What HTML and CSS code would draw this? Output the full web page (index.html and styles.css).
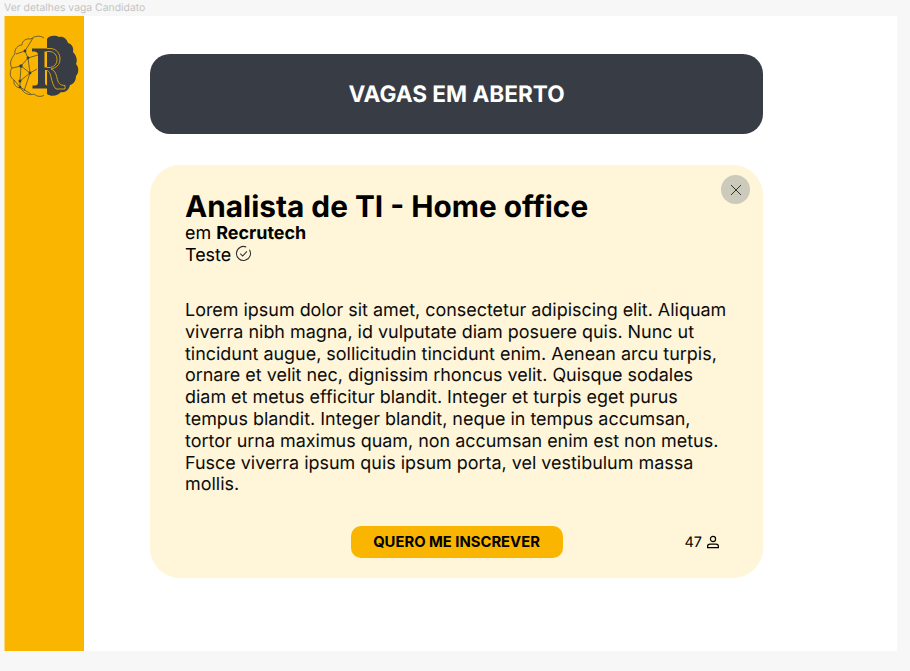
FILE: index.html
```html
<!DOCTYPE html>
<html lang="en">
<head>
  <meta charset="UTF-8">
  <title>Ver detalhes vaga Candidato</title>
  <link rel="stylesheet" href="styles.css">
</head>
<body>
  <div class="frame-label">Ver detalhes vaga Candidato</div>

  <div class="frame">
    <aside class="sidebar">
      <svg class="logo" viewBox="0 0 70 66" width="70" height="66" fill="none">
        <defs>
          <clipPath id="right-half"><rect x="38" y="0" width="32" height="66"/></clipPath>
        </defs>
        <!-- dark half of the brain -->
        <path d="M38 4C40 0 47 0 50 2C54 1 58 4 59 8C63 9 65 13 64 17C67 20 69 25 67 29C70 32 70 38 67 41C67 45 65 49 61 50C60 55 56 58 52 57C49 61 42 62 38 59Z" fill="#383c45"/>
        <!-- outlined half with its network -->
        <g stroke="#383c45" stroke-width=".7">
          <path d="M35 3C31 0 25 1 22 4C17 3 13 6 13 10C9 10 5 14 6 19C2 23 0 29 3 33C0 37 1 43 5 45C4 50 8 53 12 53C14 58 20 61 25 59C28 62 33 62 35 60"/>
          <path d="M24 3L16 16L19 23L12 31L11 46L11 52L22 59M16 16L7 19M19 23L21 38L11 46M12 31L21 38L28 34M12 31L3 33M19 23L29 20M21 38L15 56M11 52L5 45"/>
        </g>
        <g fill="#383c45">
          <circle cx="16" cy="16" r="1.4"/>
          <circle cx="19" cy="23" r="1.4"/>
          <circle cx="12" cy="31" r="1.7"/>
          <circle cx="21" cy="38" r="1.4"/>
          <circle cx="11" cy="46" r="1.5"/>
          <circle cx="11" cy="52" r="1.3"/>
        </g>
        <!-- the R: solid stem on the left, yellow line over the dark half -->
        <path d="M23 13.5H41C48 13.5 51 19 51 24C51 30 47 33 42 34C45 35 47 38 48 43C49 48 51 50.5 56 50.5V54H47C44 51 43 46 42 42C41 37 39 35 36 35V47C36 50 37 50.5 39.5 50.5V53.5H23.5V50.5C28 50.5 29 50 29 47V20C29 17 27 16.5 23 16.5Z" fill="#383c45"/>
        <path d="M23 13.5H41C48 13.5 51 19 51 24C51 30 47 33 42 34C45 35 47 38 48 43C49 48 51 50.5 56 50.5V54H47C44 51 43 46 42 42C41 37 39 35 36 35" stroke="#f9b500" stroke-width=".8" clip-path="url(#right-half)"/>
        <path d="M38 16.5H40C45 16.5 48 20 48 24.5C48 29 45 32.5 40 32.5H38" stroke="#f9b500" stroke-width=".8"/>
        <path d="M35.5 16.5H38V32.5H35.5Z" fill="#f9b500"/>
      </svg>
    </aside>

    <main class="content">
      <header class="title-bar">VAGAS EM ABERTO</header>

      <section class="job-card">
        <button class="close-btn">
          <svg viewBox="0 0 12 12" width="12" height="12" fill="none" stroke="#33352f" stroke-width="1">
            <path d="M1 1l10 10M11 1L1 11"/>
          </svg>
        </button>

        <h1>Analista de TI - Home office</h1>
        <p class="company">em <b>Recrutech</b></p>
        <p class="status">Teste
          <svg viewBox="0 0 16 16" width="17" height="17" fill="none" stroke="#333" stroke-width="1">
            <path d="M10.6 1.9a6.6 6.6 0 1 0 3 2.6"/>
            <path d="M5 8.2l2.2 2.2L11.2 6"/>
          </svg>
        </p>

        <p class="description">Lorem ipsum dolor sit amet, consectetur adipiscing elit. Aliquam viverra nibh magna, id vulputate diam posuere quis. Nunc ut tincidunt augue, sollicitudin tincidunt enim. Aenean arcu turpis, ornare et velit nec, dignissim rhoncus velit. Quisque sodales diam et metus efficitur blandit. Integer et turpis eget purus tempus blandit. Integer blandit, neque in tempus accumsan, tortor urna maximus quam, non accumsan enim est non metus. Fusce viverra ipsum quis ipsum porta, vel vestibulum massa mollis.</p>

        <div class="card-footer">
          <button class="apply-btn">QUERO ME INSCREVER</button>
          <span class="applicants">47
            <svg viewBox="0 0 14 14" width="14" height="14" fill="none" stroke="#000" stroke-width="1.2">
              <circle cx="7" cy="4" r="2.6"/>
              <path d="M1.6 12.6v-1.2c0-1.4 1-2.2 2.4-2.2h6c1.4 0 2.4.8 2.4 2.2v1.2z"/>
            </svg>
          </span>
        </div>
      </section>
    </main>
  </div>
</body>
</html>
```

FILE: styles.css
```css
* {
  box-sizing: border-box;
}

html,
body {
  height: 100%;
}

body {
  margin: 0;
  padding: 0 13px 20px 4px;
  background: #f7f7f7;
  font-family: 'Inter', sans-serif;
  text-rendering: geometricPrecision;
  color: #000;
  display: flex;
  flex-direction: column;
  overflow: hidden;
}

.frame-label {
  height: 16px;
  font-size: 10.4px;
  line-height: 16px;
  color: #c4c4c4;
}

.frame {
  flex: 1;
  display: flex;
  background: #fff;
}

.sidebar {
  width: 80px;
  flex-shrink: 0;
  background: #f9b500;
  border-left: 1px solid #fbd777;
  padding: 19px 0 0 4px;
}

.logo {
  display: block;
}

.content {
  flex: 1;
  padding: 38px 134px 0 66px;
}

.title-bar {
  height: 80px;
  padding-top: 1px;
  background: #383c45;
  border-radius: 20px;
  color: #fff;
  font-size: 22.6px;
  font-weight: 700;
  display: flex;
  align-items: center;
  justify-content: center;
}

.job-card {
  position: relative;
  height: 413px;
  margin-top: 31px;
  padding: 26px 34px 0 35px;
  background: #fff5d9;
  border-radius: 30px;
}

.close-btn {
  position: absolute;
  top: 10px;
  right: 13px;
  width: 29px;
  height: 29px;
  padding: 0;
  border: none;
  border-radius: 50%;
  background: #cbcabb;
  display: flex;
  align-items: center;
  justify-content: center;
}

h1 {
  margin: 0;
  font-size: 29.8px;
  line-height: 32px;
  font-weight: 700;
}

.company,
.status {
  margin: 0;
  font-size: 17.93px;
  line-height: 22px;
}

.company b {
  font-weight: 700;
}

.status {
  display: flex;
  align-items: center;
  gap: 4px;
}

.status svg {
  margin-top: -5px;
}

.description {
  margin: 33px 0 0;
  font-size: 17.93px;
  line-height: 21.8px;
  color: #0c0c0c;
}

.card-footer {
  position: relative;
  margin-top: 30px;
  display: flex;
  justify-content: center;
}

.apply-btn {
  width: 212px;
  height: 32px;
  margin-right: 1px;
  border: none;
  border-radius: 10px;
  background: #f9b500;
  color: #000;
  font-family: inherit;
  font-size: 14.8px;
  font-weight: 700;
}

.applicants {
  position: absolute;
  right: 9px;
  top: 8px;
  display: flex;
  align-items: center;
  gap: 4px;
  font-size: 14.5px;
  line-height: 17px;
}

.applicants svg {
  margin-top: -2px;
}
```
